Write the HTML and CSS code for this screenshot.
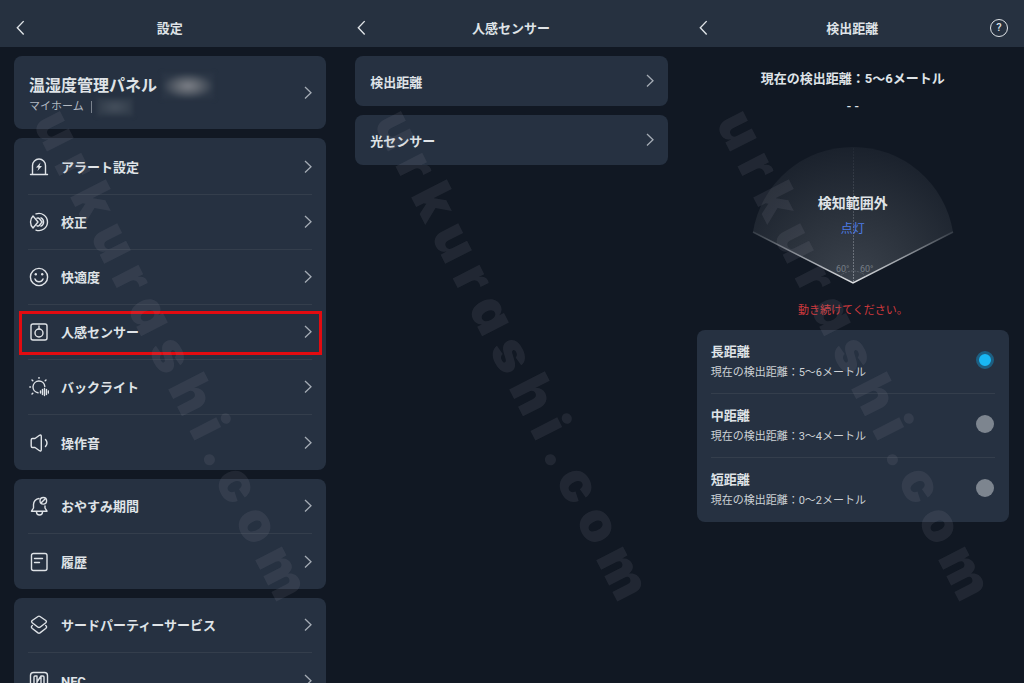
FILE: index.html
```html
<!DOCTYPE html>
<html lang="ja">
<head>
  <meta charset="UTF-8">
  <meta name="viewport" content="width=device-width, initial-scale=1.0">
  <title>設定</title>
  <link rel="stylesheet" href="styles.css">
</head>
<body>
  <svg class="defs" aria-hidden="true">
    <symbol id="back" viewBox="0 0 16 16"><path d="M11 2L5 8.200L11 14.500"/></symbol>
    <symbol id="next" viewBox="0 0 16 16"><path d="M5 2L11 7.700L5 13.500"/></symbol>
  </svg>
  <main class="screens">
    <section class="screen">
      <header class="bar">
        <button class="icon-btn" aria-label="戻る"><svg><use href="#back"/></svg></button>
        <h1>設定</h1>
      </header>
      <div class="content">
        <a href="#" class="card device">
          <div class="device-text">
            <div class="device-name">温湿度管理パネル<span class="mask"></span></div>
            <div class="device-home">マイホーム<span class="mask small"></span></div>
          </div>
          <svg class="next"><use href="#next"/></svg>
        </a>
        <nav class="card list">
          <a href="#" class="row">
            <svg class="icon" viewBox="0 0 20 20"><path d="M1.500 17.500H18.500M3.500 17.500V8.500a6.500 6.500 0 0 1 13 0V17.500"/><path class="fill" d="M11.500 5.500L7 10.500H9.500L8.500 14L13 9H10.500Z"/></svg>
            <span>アラート設定</span><svg class="next"><use href="#next"/></svg>
          </a>
          <a href="#" class="row">
            <svg class="icon" viewBox="0 0 20 20"><path d="M7 1.900A8.600 8.600 0 1 1 7 18.100M4 4L9 10L4 16A8.500 8.500 0 0 1 4 4ZM8 6.200Q9.500 5.500 10.500 6.800L13 10L10.500 13.200Q9.500 14.500 8 13.800M12 5.800a4.700 4.700 0 0 1 0 8.400"/></svg>
            <span>校正</span><svg class="next"><use href="#next"/></svg>
          </a>
          <a href="#" class="row">
            <svg class="icon" viewBox="0 0 20 20"><circle cx="10" cy="10" r="8.600"/><path d="M6 12a4.300 4.300 0 0 0 8 0"/><circle class="fill" cx="6.800" cy="7.300" r="1.200"/><circle class="fill" cx="13.200" cy="7.300" r="1.200"/></svg>
            <span>快適度</span><svg class="next"><use href="#next"/></svg>
          </a>
          <a href="#" class="row marked">
            <svg class="icon" viewBox="0 0 20 20"><rect x="2" y="2" width="16" height="16" rx="2"/><circle cx="10" cy="11" r="4"/><path d="M10 4V7"/></svg>
            <span>人感センサー</span><svg class="next"><use href="#next"/></svg>
          </a>
          <a href="#" class="row">
            <svg class="icon" viewBox="0 0 20 20"><path d="M9 15.800A5.900 5.900 0 1 1 15.800 9.500M10 0.500V1.200M0.800 10H1.500M3 3L3.800 3.800M17 3L16.200 3.800M3 17L3.800 16.200M11.500 14V16M13.500 12.500V17.500M15.500 11.500V18.500M17.500 12.500V17.500M19.500 14V16"/></svg>
            <span>バックライト</span><svg class="next"><use href="#next"/></svg>
          </a>
          <a href="#" class="row">
            <svg class="icon" viewBox="0 0 20 20"><path d="M3.500 5.500H6L10.500 2.300Q12.300 1.500 12.300 3.500V16.500Q12.300 18.500 10.500 17.700L6 14.500H3.500Q2.200 14.500 2.200 13V7Q2.200 5.500 3.500 5.500ZM16.500 6.500Q19.500 10 16.500 13.500"/></svg>
            <span>操作音</span><svg class="next"><use href="#next"/></svg>
          </a>
        </nav>
        <nav class="card list">
          <a href="#" class="row">
            <svg class="icon" viewBox="0 0 20 20"><path d="M10 2.500A6 6 0 0 0 4.500 8.500V12L2.500 15.200H18L16 12V10M7.500 16a3 3 0 0 0 6 0"/><circle cx="14.300" cy="4.800" r="3.300"/><path d="M12.500 6.500L16 3"/></svg>
            <span>おやすみ期間</span><svg class="next"><use href="#next"/></svg>
          </a>
          <a href="#" class="row">
            <svg class="icon" viewBox="0 0 20 20"><rect x="2.500" y="1.500" width="15.500" height="17" rx="2"/><path d="M5.500 6.500H13.500M5.500 10.500H10.500"/></svg>
            <span>履歴</span><svg class="next"><use href="#next"/></svg>
          </a>
        </nav>
        <nav class="card list">
          <a href="#" class="row">
            <svg class="icon" viewBox="0 0 20 20"><path d="M9 1.500L3.200 5.500Q2 6.500 3.200 7.700L9 12.200Q10 12.800 11 12.200L16.800 7.700Q18 6.500 16.800 5.500L11 1.500Q10 0.800 9 1.500ZM3.300 10.500Q1.500 12 3.300 13.500L9 17.900Q10 18.500 11 17.900L16.700 13.500Q18.500 12 16.700 10.500"/></svg>
            <span>サードパーティーサービス</span><svg class="next"><use href="#next"/></svg>
          </a>
          <a href="#" class="row">
            <svg class="icon" viewBox="0 0 20 20"><rect x="1.500" y="1.500" width="17" height="17" rx="3"/><path d="M8 15V5H6Q5 5 5 6V14Q5 15 6 15M12 5H14Q15 5 15 6V14Q15 15 14 15H12V5L8 11"/></svg>
            <span>NFC</span><svg class="next"><use href="#next"/></svg>
          </a>
        </nav>
      </div>
      <div class="watermark" aria-hidden="true">u r k u r a s h i . c o m</div>
    </section>

    <section class="screen">
      <header class="bar">
        <button class="icon-btn" aria-label="戻る"><svg><use href="#back"/></svg></button>
        <h1>人感センサー</h1>
      </header>
      <div class="content">
        <a href="#" class="card single"><span>検出距離</span><svg class="next"><use href="#next"/></svg></a>
        <a href="#" class="card single"><span>光センサー</span><svg class="next"><use href="#next"/></svg></a>
      </div>
      <div class="watermark" aria-hidden="true">u r k u r a s h i . c o m</div>
    </section>

    <section class="screen">
      <header class="bar">
        <button class="icon-btn" aria-label="戻る"><svg><use href="#back"/></svg></button>
        <h1>検出距離</h1>
        <button class="help" aria-label="ヘルプ">?</button>
      </header>
      <div class="content detect">
        <h2>現在の検出距離：5～6メートル</h2>
        <p class="value">- -</p>
        <div class="fan">
          <svg viewBox="0 0 204 140">
            <defs>
              <radialGradient id="glow" gradientUnits="userSpaceOnUse" cx="102" cy="137" r="137">
                <stop offset="0" stop-color="#3c434d"/>
                <stop offset="0.500" stop-color="#2b323c"/>
                <stop offset="1" stop-color="#1a212c"/>
              </radialGradient>
              <radialGradient id="edge" gradientUnits="userSpaceOnUse" cx="102" cy="137" r="113">
                <stop offset="0" stop-color="#e0e2e5"/>
                <stop offset="0.500" stop-color="#959aa1"/>
                <stop offset="1" stop-color="#343b45"/>
              </radialGradient>
              <linearGradient id="axis" gradientUnits="userSpaceOnUse" x1="0" y1="0" x2="0" y2="137">
                <stop offset="0" stop-color="#1f2631"/>
                <stop offset="1" stop-color="#7d838c"/>
              </linearGradient>
            </defs>
            <path class="area" d="M102 137L2 86A101.300 101.300 0 0 1 202 86Z"/>
            <path stroke="url(#edge)" stroke-width="1.500" d="M2 86L102 137L202 86"/>
            <path stroke="url(#axis)" stroke-dasharray="2 1" d="M102.500 2V136"/>
            <path stroke="#59606a" stroke-dasharray="2 1" d="M89 130Q95 125 102 125Q109 125 115 130"/>
            <text x="85" y="126">60°</text>
            <text x="109" y="126">60°</text>
          </svg>
          <div class="fan-label">
            <strong>検知範囲外</strong>
            <span>点灯</span>
          </div>
        </div>
        <p class="warning">動き続けてください。</p>
        <div class="card">
          <label class="option">
            <span><b>長距離</b><small>現在の検出距離：5～6メートル</small></span>
            <input type="radio" name="distance" checked>
          </label>
          <label class="option">
            <span><b>中距離</b><small>現在の検出距離：3～4メートル</small></span>
            <input type="radio" name="distance">
          </label>
          <label class="option">
            <span><b>短距離</b><small>現在の検出距離：0～2メートル</small></span>
            <input type="radio" name="distance">
          </label>
        </div>
      </div>
      <div class="watermark" aria-hidden="true">u r k u r a s h i . c o m</div>
    </section>
  </main>
</body>
</html>
```
FILE: styles.css
```css
* {
  box-sizing: border-box;
}
body {
  margin: 0;
  background: #111823;
  color: #dfe3e7;
  font-family: Roboto, "Noto Sans CJK JP", sans-serif;
  font-size: 13px;
  line-height: 20px;
}
h1, h2, p {
  margin: 0;
  font-size: 13px;
  font-weight: 500;
}
a {
  color: inherit;
  text-decoration: none;
}
button {
  padding: 0;
  border: none;
  background: none;
  color: inherit;
  font-family: inherit;
  cursor: pointer;
}
svg {
  display: block;
  flex: none;
  fill: none;
  stroke: currentColor;
}
.defs {
  display: none;
}
.screens {
  display: grid;
  grid-template-columns: repeat(3, 1fr);
  height: 100vh;
  overflow: hidden;
}
.screen {
  position: relative;
  min-width: 0;
}
.bar {
  display: grid;
  grid-template-columns: 20px 1fr 20px;
  align-items: center;
  height: 47px;
  padding: 8px 14px 0 12px;
  background: #263140;
}
.bar h1 {
  padding-top: 2px;
  font-weight: 700;
  text-align: center;
}
.icon-btn svg {
  width: 17px;
  height: 17px;
  stroke-width: 1.300;
}
.help {
  width: 18px;
  height: 18px;
  border: 1px solid #dfe3e7;
  border-radius: 50%;
  font-size: 11px;
  font-weight: 500;
  line-height: 16px;
}
.content {
  display: flex;
  flex-direction: column;
  gap: 9px;
  padding: 9px 15px 0 14px;
}
.card {
  padding: 0 14px;
  border-radius: 8px;
  background: #263141;
}
.list {
  padding-top: 2px;
}
.list + .list {
  padding-top: 0;
}
.next {
  width: 16px;
  height: 16px;
  margin-right: -4px;
  color: #a4abb4;
  stroke-width: 1.300;
}
.device, .single {
  display: flex;
  align-items: center;
  justify-content: space-between;
}
.device {
  height: 73px;
}
.device-text {
  padding: 4px 0 0 1px;
}
.device-name, .device-home {
  display: flex;
  align-items: center;
}
.device-name {
  height: 24px;
  font-size: 16px;
  font-weight: 700;
}
.device-home {
  height: 18px;
  color: #b3b9c1;
  font-size: 11px;
}
.mask {
  width: 52px;
  height: 26px;
  margin-left: 5px;
  background: radial-gradient(closest-side, #7d8088, #60666f 40%, #2b3645);
  filter: blur(2px);
}
.mask.small {
  width: 36px;
  height: 18px;
  background: radial-gradient(closest-side, #46505d, #303b49);
}
.device-home::after {
  content: "";
  order: 1;
  width: 1px;
  height: 12px;
  margin-left: 7px;
  background: #7b838e;
}
.device-home .mask {
  order: 2;
}
.row {
  position: relative;
  display: flex;
  align-items: center;
  gap: 12px;
  height: 55px;
  font-weight: 700;
}
.row:not(:last-child), .option:not(:last-child) {
  border-bottom: 1px solid #343e4c;
}
.row span {
  flex: 1;
  padding-top: 2px;
}
.icon {
  width: 20px;
  height: 20px;
  margin-left: 1px;
  stroke-width: 1.400;
  stroke-linecap: round;
  stroke-linejoin: round;
}
.fill {
  fill: currentColor;
  stroke: none;
}
/* highlight frame laid over the row */
.marked::after {
  content: "";
  position: absolute;
  inset: 6px -10px 4px -9px;
  border: 3px solid #e30b10;
}
.single {
  height: 50px;
  font-weight: 700;
}
.single span {
  padding: 4px 0 0 1px;
}
.detect {
  gap: 0;
  padding-top: 22px;
  text-align: center;
}
.detect h2 {
  font-weight: 700;
}
.value {
  margin-top: 8px;
}
.fan {
  display: grid;
  justify-content: center;
  margin-top: 29px;
}
.fan svg, .fan-label {
  grid-area: 1 / 1;
}
.fan svg {
  width: 204px;
  height: 140px;
}
.fan .area {
  fill: url(#glow);
  stroke: none;
}
.fan text {
  fill: #767d86;
  stroke: none;
  font-size: 9px;
}
.fan-label {
  z-index: 1;
  display: flex;
  flex-direction: column;
  gap: 6px;
  padding-top: 47px;
}
.fan-label strong {
  font-size: 14px;
  font-weight: 700;
}
.fan-label span {
  color: #4d7ce6;
  font-size: 12px;
}
.warning {
  margin: 15px 0 9px;
  color: #d2393d;
  font-size: 11px;
  font-weight: 400;
}
.option {
  display: flex;
  align-items: center;
  justify-content: space-between;
  height: 64px;
  text-align: left;
}
.option b, .option small {
  display: block;
  line-height: 21px;
}
.option b {
  font-weight: 700;
}
.option small {
  color: #cdd1d6;
  font-size: 11px;
}
.option input {
  appearance: none;
  width: 18px;
  height: 18px;
  margin: 0 1px 4px 0;
  border-radius: 50%;
  background: #7d858f;
}
.option input:checked {
  border: 3px solid #1d5f82;
  background: #19b7f3;
}
.watermark {
  position: absolute;
  top: 101px;
  left: 74px;
  z-index: 2;
  color: rgba(150, 150, 160, 0.13);
  font-family: Inter, sans-serif;
  font-size: 55px;
  font-weight: 900;
  font-feature-settings: "cv11";
  line-height: 55px;
  white-space: nowrap;
  transform: rotate(63deg);
  transform-origin: 0 0;
  pointer-events: none;
}
```
